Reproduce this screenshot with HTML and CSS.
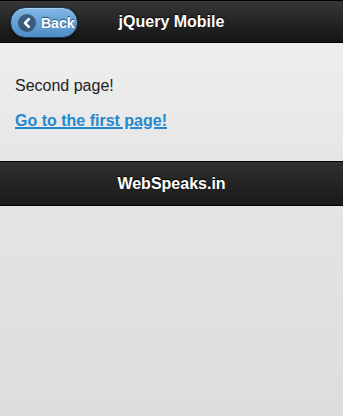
FILE: index.html
```html
<!DOCTYPE html>
<html>
<head>
<meta charset="utf-8">
<link rel="stylesheet" href="styles.css">
</head>
<body>
<div class="page">
  <header class="bar header">
    <a class="back" href="#">
      <span class="icon"><svg width="18" height="18" viewBox="0 0 18 18"><circle cx="9" cy="9" r="9" fill="#2f4a66" fill-opacity="0.8"/><path d="M10.8 5.2 L7 9 L10.8 12.8" fill="none" stroke="#fff" stroke-width="2.6" stroke-linecap="round" stroke-linejoin="round"/></svg></span>
      <span class="back-text">Back</span>
    </a>
    <h1 class="title">jQuery Mobile</h1>
  </header>
  <main class="content">
    <p class="msg">Second page!</p>
    <a class="link" href="#">Go to the first page!</a>
  </main>
  <footer class="bar footer">
    <h4 class="foot-title">WebSpeaks.in</h4>
  </footer>
</div>
</body>
</html>
```
FILE: styles.css
```css
html, body {
  margin: 0;
  padding: 0;
  height: 100%;
}
body {
  font-family: "Liberation Sans", Arial, sans-serif;
  background: linear-gradient(#ebebeb, #dddddd);
}
.page {
  display: flex;
  flex-direction: column;
  min-height: 100%;
}
.bar {
  background: linear-gradient(#363636, #141414);
  border: 1px solid #000;
  border-left: 0;
  border-right: 0;
  color: #fff;
  text-shadow: 0 -1px 1px #000;
}
.header {
  position: relative;
  height: 41px;
  display: flex;
  align-items: center;
  justify-content: center;
}
.title {
  margin: 0;
  font-size: 16px;
  font-weight: bold;
  line-height: 20px;
}
.back {
  position: absolute;
  left: 10px;
  top: 6px;
  width: 68px;
  height: 31px;
  box-sizing: border-box;
  border-radius: 16px;
  border: 1px solid #1f3a58;
  background: linear-gradient(#81b7e5, #4d8dc7);
  box-shadow: 0 1px 3px rgba(0,0,0,0.6), inset 0 1px 0 rgba(255,255,255,0.35);
  display: flex;
  align-items: center;
  text-decoration: none;
  color: #fff;
  padding-left: 7px;
  gap: 5px;
}
.icon {
  display: flex;
  width: 18px;
  height: 18px;
}
.back-text {
  font-size: 14px;
  font-weight: bold;
  text-shadow: 0 -1px 1px #1f4a74;
}
.content {
  padding: 15px;
  background: linear-gradient(#eeeeee, #e6e6e6);
}
.msg {
  margin: 18px 0 0;
  font-size: 16px;
  line-height: 20px;
  color: #222;
}
.link {
  display: inline-block;
  margin: 15px 0 15px;
  font-size: 16px;
  font-weight: bold;
  line-height: 20px;
  color: #2489ce;
  text-decoration: underline;
  text-decoration-thickness: 2px;
}
.footer {
  height: 43px;
  display: flex;
  align-items: center;
  justify-content: center;
  background: linear-gradient(#303030, #191919);
}
.foot-title {
  margin: 0;
  font-size: 16px;
  font-weight: bold;
  line-height: 20px;
}
```
